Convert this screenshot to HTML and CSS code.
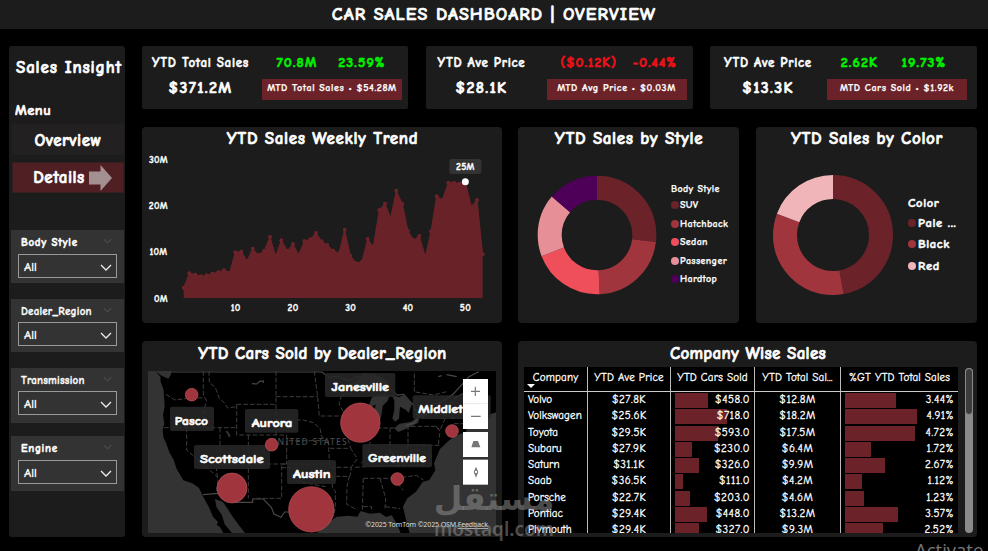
FILE: index.html
```html
<!DOCTYPE html>
<html lang="en">
<head>
    <meta charset="UTF-8">
    <title>Car Sales Dashboard</title>
    <link rel="stylesheet" href="styles.css">
</head>
<body>
    <header class="topbar"><h1>CAR SALES DASHBOARD | OVERVIEW</h1></header>

    <div class="dashboard">
        <aside class="sidebar">
            <h2>Sales Insight</h2>
            <p class="menu-label">Menu</p>
            <a class="nav-btn">Overview</a>
            <a class="nav-btn active">Details
                <svg class="arrow" viewBox="0 0 23 26"><path d="M0 6.500H11.500V0L23 13L11.500 26V19.500H0Z"/></svg>
            </a>
            <div class="slicers">
                <div class="slicer">
                    <div class="slicer-title wide">Body Style<svg class="chev dim" viewBox="0 0 12 7"><path d="M1 1L6 6L11 1"/></svg></div>
                    <div class="select">All<svg class="chev" viewBox="0 0 12 7"><path d="M1 1L6 6L11 1"/></svg></div>
                </div>
                <div class="slicer">
                    <div class="slicer-title">Dealer_Region<svg class="chev dim" viewBox="0 0 12 7"><path d="M1 1L6 6L11 1"/></svg></div>
                    <div class="select">All<svg class="chev" viewBox="0 0 12 7"><path d="M1 1L6 6L11 1"/></svg></div>
                </div>
                <div class="slicer tall">
                    <div class="slicer-title">Transmission<svg class="chev dim" viewBox="0 0 12 7"><path d="M1 1L6 6L11 1"/></svg></div>
                    <div class="select">All<svg class="chev" viewBox="0 0 12 7"><path d="M1 1L6 6L11 1"/></svg></div>
                </div>
                <div class="slicer tall">
                    <div class="slicer-title wide">Engine<svg class="chev dim" viewBox="0 0 12 7"><path d="M1 1L6 6L11 1"/></svg></div>
                    <div class="select">All<svg class="chev" viewBox="0 0 12 7"><path d="M1 1L6 6L11 1"/></svg></div>
                </div>
            </div>
        </aside>

        <main class="content">
            <section class="kpis">
                <div class="kpi">
                    <div class="kpi-main"><span class="kpi-label">YTD Total Sales</span><span class="kpi-value">$371.2M</span></div>
                    <div class="kpi-side">
                        <div class="deltas up"><span>70.8M</span><span>23.59%</span></div>
                        <div class="pill">MTD Total Sales • $54.28M</div>
                    </div>
                </div>
                <div class="kpi kpi-mid">
                    <div class="kpi-main"><span class="kpi-label">YTD Ave Price</span><span class="kpi-value">$28.1K</span></div>
                    <div class="kpi-side">
                        <div class="deltas down"><span>($0.12K)</span><span>-0.44%</span></div>
                        <div class="pill">MTD Avg Price • $0.03M</div>
                    </div>
                </div>
                <div class="kpi kpi-last">
                    <div class="kpi-main"><span class="kpi-label">YTD Ave Price</span><span class="kpi-value">$13.3K</span></div>
                    <div class="kpi-side">
                        <div class="deltas up"><span>2.62K</span><span>19.73%</span></div>
                        <div class="pill">MTD Cars Sold • $1.92k</div>
                    </div>
                </div>
            </section>

            <section class="charts">
                <div class="panel">
                    <h3>YTD Sales Weekly Trend</h3>
                    <svg class="chart" viewBox="6 90 1080 519">
                        <defs>
                            <marker id="dot" viewBox="0 0 12 12" refX="6" refY="6" markerWidth="12" markerHeight="12" markerUnits="userSpaceOnUse"><circle cx="6" cy="6" r="6" fill="#6b2329"/></marker>
                        </defs>
                        <path class="area" d="M131 534V503L148 460L166 464L183 469L200 466L217 461L235 456L252 451L269 454L286 397L304 395L321 423L338 386L355 405L373 392L390 351L407 408L424 361L442 392L459 372L476 405L493 363L511 358L528 339L545 364L562 375L580 392L597 400L614 329L631 407L649 430L666 425L683 357L700 380L718 270L735 251L752 293L769 212L787 252L804 333L821 361L838 348L856 410L873 334L890 229L907 240L925 188L942 188L959 191L976 186L994 260L1011 240L1028 403V534Z"/>
                        <polyline class="trend" points="131,503 148,460 166,464 183,469 200,466 217,461 235,456 252,451 269,458 286,397 304,395 321,423 338,386 355,405 373,392 390,351 407,408 424,361 442,392 459,372 476,405 493,363 511,358 528,339 545,364 562,375 580,392 597,400 614,329 631,407 649,430 666,425 683,357 700,380 718,270 735,251 752,293 769,212 787,252 804,333 821,361 838,348 856,410 873,334 890,229 907,240 925,188 942,188 959,191 976,186 994,260 1011,240 1028,403"/>
                        <rect x="928" y="117" width="96" height="45" rx="8" fill="#333"/>
                        <circle cx="976" cy="185" r="10.500" fill="#fff"/>
                        <g class="axis">
                            <text x="976" y="149">25M</text>
                            <text x="55" y="129">30M</text>
                            <text x="55" y="267">20M</text>
                            <text x="55" y="405">10M</text>
                            <text x="63" y="546">0M</text>
                            <text x="287" y="573">10</text>
                            <text x="459" y="573">20</text>
                            <text x="632" y="573">30</text>
                            <text x="804" y="573">40</text>
                            <text x="976" y="573">50</text>
                        </g>
                    </svg>
                </div>

                <div class="panel">
                    <h3>YTD Sales by Style</h3>
                    <div class="donut-row">
                        <svg class="donut" viewBox="0 0 360 360">
                            <g transform="rotate(-90 180 180)">
                                <circle pathLength="100" cx="180" cy="180" r="142" stroke="#6b2329" stroke-dasharray="26.900 100"/>
                                <circle pathLength="100" cx="180" cy="180" r="142" stroke="#a0353d" stroke-dasharray="22.300 100" stroke-dashoffset="-26.900"/>
                                <circle pathLength="100" cx="180" cy="180" r="142" stroke="#ef4f5b" stroke-dasharray="19.900 100" stroke-dashoffset="-49.200"/>
                                <circle pathLength="100" cx="180" cy="180" r="142" stroke="#e68f96" stroke-dasharray="17 100" stroke-dashoffset="-69.100"/>
                                <circle pathLength="100" cx="180" cy="180" r="142" stroke="#4e0059" stroke-dasharray="13.900 100" stroke-dashoffset="-86.100"/>
                            </g>
                        </svg>
                        <ul class="legend">
                            <li class="legend-title">Body Style</li>
                            <li><i class="suv"></i>SUV</li>
                            <li><i class="hatch"></i>Hatchback</li>
                            <li><i class="sedan"></i>Sedan</li>
                            <li><i class="pass"></i>Passenger</li>
                            <li><i class="hard"></i>Hardtop</li>
                        </ul>
                    </div>
                </div>

                <div class="panel">
                    <h3>YTD Sales by Color</h3>
                    <div class="donut-row color-row">
                        <svg class="donut" viewBox="0 0 360 360">
                            <g transform="rotate(-90 180 180)">
                                <circle pathLength="100" cx="180" cy="180" r="144" stroke="#6b2329" stroke-dasharray="47.100 100"/>
                                <circle pathLength="100" cx="180" cy="180" r="144" stroke="#a0353d" stroke-dasharray="33.600 100" stroke-dashoffset="-47.100"/>
                                <circle pathLength="100" cx="180" cy="180" r="144" stroke="#efb5b9" stroke-dasharray="19.300 100" stroke-dashoffset="-80.700"/>
                            </g>
                        </svg>
                        <ul class="legend big">
                            <li class="legend-title">Color</li>
                            <li><i class="suv"></i>Pale ...</li>
                            <li><i class="hatch"></i>Black</li>
                            <li><i class="red"></i>Red</li>
                        </ul>
                    </div>
                </div>
            </section>

            <section class="bottom">
                <div class="panel map-panel">
                    <h3>YTD Cars Sold by Dealer_Region</h3>
                    <svg class="map" viewBox="24 108 1044 486">
                        <rect x="24" y="108" width="1044" height="486" fill="#333"/>
                        <!-- mainland -->
                        <path class="land" d="M46 108L62 121L85 131L92 120L94 108H1068V232L1045 240L1020 250L985 262L978 290L945 303L925 318L900 342L882 385L886 406L868 435L848 441L828 470L802 490L789 515L798 555L809 594H782L771 567L755 541L738 546L720 533L690 536L662 528L652 545L625 542L590 545L555 570L530 594H315L294 567L275 541L262 520L248 500L225 492L229 515L246 541L254 568L276 594H250L239 575L230 570L234 561L219 545L206 515L190 486L177 459L157 445L130 436L110 402L101 375L88 352L78 324L70 306L68 285L73 263L69 241L74 215L71 165L62 140L61 125Z"/>
                        <!-- lakes -->
                        <g class="lake">
                            <path d="M604 163L625 149L651 135L671 113L705 118L738 135L752 164L729 157L705 160L684 158L665 167L645 158Z"/>
                            <path d="M695 188L720 177L749 180L743 197L728 213L724 244L715 266L701 260L699 235L708 209L697 213L683 221Z"/>
                            <path d="M753 178L777 187L794 178L817 204L806 234L797 224L780 215L777 251L765 260L757 250L763 226L763 195Z"/>
                            <path d="M762 280L779 266L814 260L838 243L835 263L805 278L775 291Z"/>
                            <path d="M823 240L848 216L890 215L884 226L850 249Z"/>
                            <path d="M257 288L263 288L272 302L268 308Z"/>
                        </g>
                        <!-- country borders and rivers -->
                        <path class="border" d="M90 111H546L568 128L590 123L626 137L660 122M752 164L773 181L793 177M817 204L835 243L824 263L797 272M848 216L900 203L940 177L987 125L1016 110M940 191L980 170L1020 140M189 479L237 475L286 502H338V492H370L394 517L402 537L423 547L434 531L451 531M336 146L350 147L359 139L370 138L370 144M895 125L905 122M920 119L950 125"/>
                        <!-- state lines -->
                        <path class="states" d="M78 178L105 195L145 190L195 188M190 108V180L200 198L190 228V278M72 278H290M207 108L208 142L226 158L238 190L253 203L263 219L290 215M290 208H408M290 208V300H440V387M408 108V300M408 185H533M408 255H490L520 263L540 280L545 305L560 317M140 278V345L234 427M240 278V387L229 401L234 440L228 475M240 387H565M325 300V490M440 387H425V490H340M425 398H470V438L500 444L528 450L558 455M523 108L533 185L538 243H605M560 317H442M565 317L569 397M570 397H634L630 424H565M577 425V460L586 468V515L581 545M628 423L621 455L620 508L652 525M670 430L667 525M720 430L737 490L735 520M669 515H695V530M736 515L780 521M670 430H765M760 430L790 466M765 430L830 421L850 435M645 397L705 393L855 390M570 340L632 340L652 371L633 398M605 180L597 206L610 232L638 245L635 276L620 299L632 340M605 180L628 174L650 181M639 245H692M690 260V325L680 370L658 389M690 279H762M750 278V350L726 365L700 370L680 388M750 350L775 365L800 340L804 326V273M804 331H898M813 274H888L900 288L895 330M770 396L792 369L822 341L850 350L875 365M888 274L900 285L917 247V190M938 251L932 210L950 187M932 250H976M942 266H979M823 170V109M827 171L880 180L920 170"/>
                        <text class="country" x="390" y="330" textLength="230">UNITED STATES</text>
                        <g class="tags">
                            <rect x="90" y="215" width="132" height="73"/>
                            <rect x="315" y="222" width="160" height="71"/>
                            <rect x="162" y="330" width="228" height="72"/>
                            <rect x="441" y="375" width="147" height="72"/>
                            <rect x="555" y="114" width="211" height="72"/>
                            <rect x="667" y="327" width="209" height="70"/>
                            <rect x="818" y="181" width="234" height="71"/>
                        </g>
                        <g class="bubbles">
                            <circle cx="155" cy="179" r="19"/>
                            <circle cx="395" cy="329" r="19"/>
                            <circle cx="276" cy="459" r="45"/>
                            <circle cx="514" cy="523" r="68"/>
                            <circle cx="661" cy="263" r="59"/>
                            <circle cx="772" cy="432" r="19"/>
                            <circle cx="936" cy="288" r="19"/>
                        </g>
                        <g class="places">
                            <text x="104" y="270" textLength="100" lengthAdjust="spacingAndGlyphs">Pasco</text>
                            <text x="335" y="276" textLength="122" lengthAdjust="spacingAndGlyphs">Aurora</text>
                            <text x="180" y="384" textLength="191" lengthAdjust="spacingAndGlyphs">Scottsdale</text>
                            <text x="459" y="428" textLength="113" lengthAdjust="spacingAndGlyphs">Austin</text>
                            <text x="574" y="168" textLength="173" lengthAdjust="spacingAndGlyphs">Janesville</text>
                            <text x="684" y="381" textLength="174" lengthAdjust="spacingAndGlyphs">Greenville</text>
                            <text x="835" y="234" textLength="134" lengthAdjust="spacingAndGlyphs">Middlet</text>
                        </g>
                        <g class="controls">
                            <rect x="969" y="132" width="75" height="150"/>
                            <rect x="969" y="291" width="75" height="75"/>
                            <rect x="969" y="374" width="75" height="75"/>
                            <path d="M970 206H1043" stroke="#ddd" stroke-width="2"/>
                            <path d="M993 169H1020M1006 155V183M993 244H1022" stroke="#777" stroke-width="3.500"/>
                            <path d="M1000 318H1014L1021 337H994Z" fill="#777"/>
                            <path d="M1008 395L1015 411L1008 428L1001 411Z" fill="#777"/>
                            <circle cx="1008" cy="411" r="3.500" fill="#fff"/>
                        </g>
                        <text class="credit" x="676" y="576" textLength="368">©2025 TomTom  ©2025 OSM  <tspan text-decoration="underline">Feedback</tspan></text>
                    </svg>
                </div>

                <div class="panel table-panel">
                    <h3>Company Wise Sales</h3>
                    <div class="table-wrap">
                        <div class="table-clip">
                            <table>
                                <thead>
                                    <tr><th><span class="sort"></span>Company</th><th>YTD Ave Price</th><th>YTD Cars Sold</th><th>YTD Total Sal...</th><th>%GT YTD Total Sales</th></tr>
                                </thead>
                                <tbody>
                                    <tr><td>Volvo</td><td>$27.8K</td><td><b style="width:33px"></b>$458.0</td><td>$12.8M</td><td><b style="width:51px"></b>3.44%</td></tr>
                                    <tr><td>Volkswagen</td><td>$25.6K</td><td><b style="width:52px"></b>$718.0</td><td>$18.2M</td><td><b style="width:72px"></b>4.91%</td></tr>
                                    <tr><td>Toyota</td><td>$29.5K</td><td><b style="width:43px"></b>$593.0</td><td>$17.5M</td><td><b style="width:70px"></b>4.72%</td></tr>
                                    <tr><td>Subaru</td><td>$27.9K</td><td><b style="width:17px"></b>$230.0</td><td>$6.4M</td><td><b style="width:26px"></b>1.72%</td></tr>
                                    <tr><td>Saturn</td><td>$31.1K</td><td><b style="width:24px"></b>$326.0</td><td>$9.9M</td><td><b style="width:40px"></b>2.67%</td></tr>
                                    <tr><td>Saab</td><td>$36.5K</td><td><b style="width:8px"></b>$111.0</td><td>$4.2M</td><td><b style="width:17px"></b>1.12%</td></tr>
                                    <tr><td>Porsche</td><td>$22.7K</td><td><b style="width:15px"></b>$203.0</td><td>$4.6M</td><td><b style="width:19px"></b>1.23%</td></tr>
                                    <tr><td>Pontiac</td><td>$29.4K</td><td><b style="width:32px"></b>$448.0</td><td>$13.2M</td><td><b style="width:53px"></b>3.57%</td></tr>
                                    <tr><td>Plymouth</td><td>$29.4K</td><td><b style="width:24px"></b>$327.0</td><td>$9.3M</td><td><b style="width:38px"></b>2.52%</td></tr>
                                </tbody>
                            </table>
                        </div>
                        <div class="scrollbar"><div class="thumb"></div></div>
                    </div>
                </div>
            </section>
        </main>
    </div>

    <div class="watermark">
        <span class="wm-ar" lang="ar">مستقل</span>
        <span class="wm-en">mostaql.com</span>
    </div>
    <div class="activate">Activate</div>
</body>
</html>
```

FILE: styles.css
```css
* {
    box-sizing: border-box;
}

body {
    margin: 0;
    width: 988px;
    height: 551px;
    overflow: hidden;
    position: relative;
    background: #000;
    color: #fff;
    font-family: "Comic Sans MS", "Comic Neue", "Noto Sans", sans-serif;
    font-weight: bold;
    -webkit-text-stroke: 0.65px;
}

h1, h2, h3, p, ul {
    margin: 0;
    padding: 0;
}

.topbar {
    height: 29px;
    background: #1c1c1c;
    text-align: center;
}

.topbar h1 {
    font-size: 18px;
    letter-spacing: 1.05px;
    line-height: 29px;
    white-space: nowrap;
}

.dashboard {
    display: flex;
    gap: 17px;
    padding: 17px 11px 0 9px;
}

/* sidebar */
.sidebar {
    width: 116px;
    height: 491px;
    flex: none;
    background: #1c1c1c;
    border-radius: 3px;
    padding: 8px 1px 0 3px;
}

.sidebar h2 {
    font-size: 17px;
    letter-spacing: 0.85px;
    line-height: 27px;
    height: 26px;
    padding-left: 4px;
    white-space: nowrap;
}

.menu-label {
    font-size: 14.5px;
    letter-spacing: 0.5px;
    line-height: 21px;
    height: 20px;
    margin: 20px 0 4px 3px;
}

.nav-btn {
    display: flex;
    align-items: center;
    justify-content: center;
    height: 31px;
    font-size: 17px;
    letter-spacing: 0.5px;
    background: #222021;
    margin-bottom: 7px;
    padding-top: 1px;
}

.nav-btn.active {
    gap: 4px;
    background: #4f1f24;
    border: 1px solid #35201f;
    padding: 0 0 0 9px;
}

.arrow {
    width: 23px;
    height: 26px;
    fill: #a39090;
}

.slicers {
    display: flex;
    flex-direction: column;
    gap: 16px;
    margin: 37px 0 0 -1px;
}

.slicer {
    height: 53px;
    background: #333;
    padding: 4px 7px 0;
}

.slicer.tall {
    height: 55px;
}

.slicer.tall + .slicer.tall {
    margin-top: -3px;
}

.slicer-title {
    display: flex;
    justify-content: space-between;
    font-size: 11px;
    letter-spacing: 0.2px;
    line-height: 17px;
    padding: 0 5px 0 3px;
    height: 20px;
    -webkit-text-stroke: 0.3px;
}

.slicer-title.wide {
    letter-spacing: 0.7px;
    -webkit-text-stroke: 0.5px;
}

.slicer + .slicer .slicer-title {
    height: 19px;
}

.slicer:last-child .slicer-title {
    height: 20px;
}

.select {
    display: flex;
    align-items: center;
    justify-content: space-between;
    height: 24px;
    border: 1px solid #999;
    font-size: 12.5px;
    font-weight: 500;
    padding: 2px 4px 0 5px;
    -webkit-text-stroke: 0.4px;
}

.chev {
    width: 12px;
    height: 7px;
    fill: none;
    stroke: #eee;
    stroke-width: 1.3;
}

.chev.dim {
    width: 9px;
    height: 6px;
    margin-top: 4px;
    stroke: #5c5c5c;
}

/* content grid */
.content {
    display: flex;
    flex-direction: column;
    gap: 18px;
}

.kpis {
    display: grid;
    grid-template-columns: 266px 267px 267px;
    column-gap: 17.5px;
}

.kpi {
    display: flex;
    gap: 3px;
    height: 63px;
    background: #1c1c1c;
    border-radius: 2px;
}

.kpi-main {
    width: 117px;
    display: flex;
    flex-direction: column;
    align-items: center;
    padding-top: 7px;
    white-space: nowrap;
}

.kpi-mid .kpi-main {
    width: 112px;
    margin-right: 6px;
}

.kpi-last .kpi-main {
    width: 114px;
    padding-left: 2px;
}

.kpi-label {
    font-size: 13px;
    letter-spacing: 0.7px;
    line-height: 20px;
    -webkit-text-stroke: 0.5px;
}

.kpi-value {
    font-size: 16px;
    letter-spacing: 1.3px;
    line-height: 31px;
}

.kpi-side {
    width: 140px;
    padding-top: 7px;
}

.deltas {
    display: flex;
    justify-content: space-around;
    padding: 0 6px 0 4px;
    font-size: 14px;
    letter-spacing: 1.1px;
    line-height: 20px;
}

.kpi-mid .deltas {
    padding: 0 2px 0 6px;
    letter-spacing: 0.9px;
}

.kpi-last .deltas {
    padding: 0 9px 0 2px;
}

.up {
    color: #00f200;
}

.down {
    color: #ee1118;
}

.pill {
    height: 21px;
    margin-top: 6px;
    background: #6b2329;
    text-align: center;
    font-size: 10px;
    letter-spacing: 0.6px;
    line-height: 18px;
    white-space: nowrap;
    -webkit-text-stroke: 0.25px;
}

.charts {
    display: grid;
    grid-template-columns: 360px 221px 221px;
    column-gap: 16.5px;
    height: 196px;
}

.charts .panel:nth-child(2) {
    margin: 0 0.5px 0 -0.5px;
}

.bottom {
    display: grid;
    grid-template-columns: 360px 459px;
    column-gap: 16px;
    height: 196px;
}

.panel {
    background: #1c1c1c;
    border-radius: 4px;
    overflow: hidden;
}

.panel h3 {
    height: 23px;
    font-size: 17px;
    letter-spacing: 0.65px;
    line-height: 24px;
    text-align: center;
    white-space: nowrap;
    padding-left: 1px;
}

.bottom .panel h3 {
    letter-spacing: 0.3px;
    line-height: 26px;
}

/* trend chart */
.chart {
    display: block;
    width: 360px;
    height: 173px;
}

.area {
    fill: #692328;
}

.trend {
    fill: none;
    stroke: #6b2329;
    stroke-width: 3;
    marker-start: url(#dot);
    marker-mid: url(#dot);
    marker-end: url(#dot);
}

.axis text {
    fill: #fff;
    stroke: #fff;
    stroke-width: 1;
    font-size: 29px;
    letter-spacing: 0.8px;
    text-anchor: middle;
}

/* donuts */
.donut-row {
    display: flex;
    align-items: flex-start;
    padding: 25px 0 0 19px;
}

.donut {
    width: 120px;
    height: 120px;
    flex: none;
    fill: none;
    stroke-width: 72;
}

.legend {
    list-style: none;
    margin: 6px 0 0 14px;
    font-size: 10px;
    letter-spacing: 0.35px;
    white-space: nowrap;
    -webkit-text-stroke: 0.25px;
}

.legend li {
    display: flex;
    align-items: center;
    gap: 1px;
    height: 18.5px;
}

.legend .legend-title {
    height: 15px;
}

.legend i {
    width: 8px;
    height: 8px;
    border-radius: 50%;
}

.color-row {
    padding-left: 17px;
}

.legend.big {
    font-size: 12.5px;
    letter-spacing: 0.6px;
    margin: 19px 0 0 15px;
    -webkit-text-stroke: 0.5px;
}

.legend.big li {
    height: 21.5px;
    gap: 2px;
}

.legend.big .legend-title {
    height: 18px;
}

.suv { background: #6b2329; }
.hatch { background: #a0353d; }
.sedan { background: #ef4f5b; }
.pass { background: #e68f96; }
.hard { background: #4e0059; }
.red { background: #efb5b9; }

/* map */
.map {
    display: block;
    width: 348px;
    height: 162px;
    margin: 7px 0 0 6px;
}

.land { fill: #000; }
.lake { fill: #333; }

.border {
    fill: none;
    stroke: #484848;
    stroke-width: 3.5;
}

.states {
    fill: none;
    stroke: #3d3d3d;
    stroke-width: 3;
    stroke-dasharray: 14 6;
}

.country {
    font-family: "Noto Sans", sans-serif;
    font-size: 26px;
    font-weight: 500;
    fill: #4a4a4a;
    -webkit-text-stroke: 0;
}

.tags rect {
    fill: #282828;
    fill-opacity: 0.85;
    rx: 6px;
}

.bubbles circle {
    fill: #a0353d;
    stroke: #c0555c;
    stroke-width: 2;
}

.places text {
    fill: #fff;
    stroke: #fff;
    stroke-width: 1.8;
    font-size: 38px;
}

.controls rect {
    fill: #fff;
}

.credit {
    font-family: "Noto Sans", sans-serif;
    font-size: 21px;
    font-weight: normal;
    fill: #ddd;
    -webkit-text-stroke: 0;
}

/* table */
.table-wrap {
    display: flex;
    gap: 7px;
    padding: 3px 0 0 6px;
}

.table-clip {
    width: 434px;
    height: 166px;
    overflow: hidden;
    background: #000;
}

table {
    width: 434px;
    table-layout: fixed;
    border-collapse: separate;
    border-spacing: 0;
    font-size: 11px;
    -webkit-text-stroke: 0.3px;
}

th {
    position: relative;
    height: 25px;
    padding: 0 0 4px;
    font-size: 11px;
    letter-spacing: 0.2px;
    font-weight: 500;
    border-bottom: 1px solid #ccc;
    white-space: nowrap;
}

th:nth-child(1) { width: 64px; }
th:nth-child(2) { width: 83px; }
th:nth-child(3) { width: 84px; }
th:nth-child(4) { width: 86px; }

th:not(:last-child),
td:not(:last-child) {
    border-right: 1px solid #bbb;
}

.sort {
    position: absolute;
    left: 3px;
    bottom: 3px;
    border: 4px solid transparent;
    border-top-color: #fff;
    border-bottom: 0;
}

td {
    position: relative;
    height: 16.3px;
    padding: 0;
    line-height: 16.3px;
    text-align: center;
    font-weight: 500;
    letter-spacing: 0.5px;
}

td:first-child {
    text-align: left;
    padding-left: 4px;
    letter-spacing: 0.1px;
}

td:nth-child(3),
td:nth-child(5) {
    text-align: right;
    padding-right: 4px;
}

td b {
    float: left;
    height: 15px;
    margin: 1px -60px 0 4px;
    background: #6b2329;
}

.scrollbar {
    width: 8px;
    height: 165px;
    margin-top: 1px;
    border-radius: 4px;
    background: #8a8a8a;
}

.thumb {
    height: 47px;
    border: 1px solid #8a8a8a;
    border-radius: 4px;
    background: #3c3c3c;
}

/* overlays */
.watermark {
    position: absolute;
    left: 433px;
    top: 478px;
    width: 122px;
    color: rgba(150, 150, 150, 0.5);
    display: flex;
    flex-direction: column;
    align-items: center;
    -webkit-text-stroke: 0;
}

.wm-ar {
    font-family: "DejaVu Sans", sans-serif;
    font-size: 33px;
    line-height: 41px;
}

.wm-en {
    font-family: "Noto Sans", sans-serif;
    font-size: 19px;
    font-weight: 600;
    line-height: 20px;
}

.activate {
    position: absolute;
    left: 915px;
    top: 538px;
    font-family: "Open Sans", sans-serif;
    font-size: 18.5px;
    line-height: 24px;
    font-weight: normal;
    color: #777;
    -webkit-text-stroke: 0;
}
```
